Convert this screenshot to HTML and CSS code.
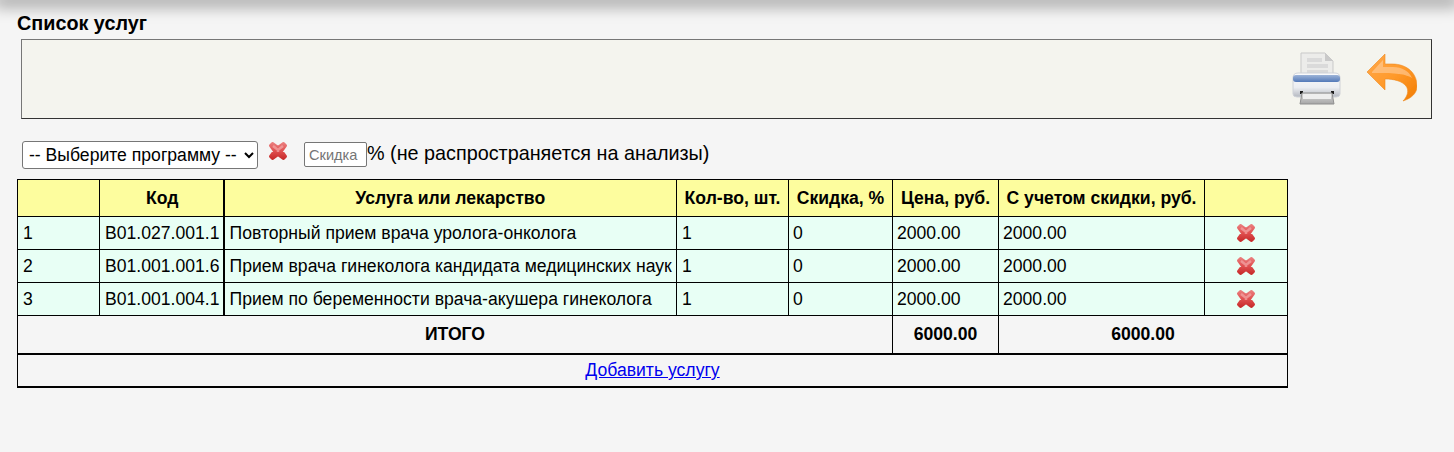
FILE: index.html
```html
<!DOCTYPE html>
<html lang="ru">
<head>
<meta charset="utf-8">
<title>Список услуг</title>
<link rel="stylesheet" href="styles.css">
</head>
<body>
<div class="top-shadow"></div>
<main class="page">
  <h1 class="title">Список услуг</h1>
  <div class="toolbar">
    <svg class="tool-print" width="54" height="56" viewBox="0 0 54 56">
      <defs>
        <linearGradient id="body" x1="0" y1="0" x2="0" y2="1"><stop offset="0" stop-color="#fbfbfc"/><stop offset="0.6" stop-color="#eceef2"/><stop offset="1" stop-color="#b4b8c0"/></linearGradient>
        <linearGradient id="band" x1="0" y1="0" x2="0" y2="1"><stop offset="0" stop-color="#9db4d8"/><stop offset="1" stop-color="#5379b8"/></linearGradient>
        <linearGradient id="tray" x1="0" y1="0" x2="0" y2="1"><stop offset="0" stop-color="#dcdcdc"/><stop offset="1" stop-color="#a6a6a6"/></linearGradient>
        <filter id="soft" x="-5%" y="-5%" width="110%" height="110%"><feGaussianBlur stdDeviation="0.400"/></filter>
      </defs>
      <g filter="url(#soft)">
        <path d="M13 3H37L45 11V27H13Z" fill="#ececea" stroke="#c9c9c9"/>
        <path d="M37 3V11H45Z" fill="#c9c9c9"/>
        <path d="M19 8H34V12H19ZM19 14H40V18H19ZM19 20H40V23H19Z" fill="#dadada"/>
        <path d="M5 28Q5 23 10 23H47Q52 23 52 28V44Q52 47 48 47H9Q5 47 5 44Z" fill="url(#body)" stroke="#cfd2d8"/>
        <rect x="5" y="25" width="47" height="7" rx="3" fill="url(#band)"/>
        <rect x="12" y="41" width="3" height="3" fill="#1c1c1c"/>
        <rect x="43" y="41" width="3" height="3" fill="#1c1c1c"/>
        <path d="M14 43H44L46 54H12Z" fill="url(#tray)" stroke="#8f8f8f"/>
        <rect x="15" y="44" width="28" height="5" fill="#eeeeee"/>
      </g>
    </svg>
    <svg class="tool-back" width="52" height="54" viewBox="0 0 52 54">
      <defs>
        <linearGradient id="arrow" x1="0" y1="0" x2="1" y2="1"><stop offset="0" stop-color="#ffa94d"/><stop offset="0.5" stop-color="#ff9a2b"/><stop offset="1" stop-color="#f27c02"/></linearGradient>
      </defs>
      <g filter="url(#soft)">
        <path d="M2 22L20 4V14H27C43 14 52 24 52 36C52 43 47 48 38 51C43 46 44 40 41 36C37 31 29 29 20 29V40Z" fill="url(#arrow)" stroke="#ee8a20" stroke-width="0.600"/>
        <path d="M7 22L18 10V17H28C37 17 44 21 47 28C38 23 28 23 7 23Z" fill="#ffcf9e" opacity="0.600"/>
      </g>
    </svg>
  </div>
  <div class="filters">
    <select class="program"><option>-- Выберите программу --</option></select>
    <svg class="del del-filter" width="20" height="20" viewBox="0 0 20 20"><use href="#cross"/></svg>
    <input class="discount" type="text" placeholder="Скидка">
    <span class="note">% (не распространяется на анализы)</span>
  </div>
  <table class="services">
    <colgroup>
      <col class="c1"><col class="c2"><col class="c3"><col class="c4"><col class="c5"><col class="c6"><col class="c7"><col class="c8">
    </colgroup>
    <thead>
      <tr>
        <th></th><th class="thick-r">Код</th><th>Услуга или лекарство</th><th>Кол-во, шт.</th><th>Скидка, %</th><th>Цена, руб.</th><th>С учетом скидки, руб.</th><th></th>
      </tr>
    </thead>
    <tbody>
      <tr class="row"><td>1</td><td class="thick-r">B01.027.001.1</td><td>Повторный прием врача уролога-онколога</td><td>1</td><td>0</td><td>2000.00</td><td>2000.00</td><td class="act"><svg class="del" width="20" height="20" viewBox="0 0 20 20"><use href="#cross"/></svg></td></tr>
      <tr class="row"><td>2</td><td class="thick-r">B01.001.001.6</td><td>Прием врача гинеколога кандидата медицинских наук</td><td>1</td><td>0</td><td>2000.00</td><td>2000.00</td><td class="act"><svg class="del" width="20" height="20" viewBox="0 0 20 20"><use href="#cross"/></svg></td></tr>
      <tr class="row"><td>3</td><td class="thick-r">B01.001.004.1</td><td>Прием по беременности врача-акушера гинеколога</td><td>1</td><td>0</td><td>2000.00</td><td>2000.00</td><td class="act"><svg class="del" width="20" height="20" viewBox="0 0 20 20"><use href="#cross"/></svg></td></tr>
      <tr class="total"><th colspan="5">ИТОГО</th><th>6000.00</th><th colspan="2">6000.00</th></tr>
      <tr class="add"><td colspan="8"><a href="#">Добавить услугу</a></td></tr>
    </tbody>
  </table>
</main>
<svg class="defs" width="0" height="0">
  <defs>
    <linearGradient id="crossfill" x1="0" y1="0" x2="0" y2="1"><stop offset="0" stop-color="#e97a7a"/><stop offset="0.5" stop-color="#e05050"/><stop offset="1" stop-color="#c92e2e"/></linearGradient>
    <filter id="crosssoft" x="-20%" y="-20%" width="140%" height="140%"><feGaussianBlur stdDeviation="0.700"/></filter>
    <g id="cross">
      <path d="M4.500 2.500L10 6.500L15.500 2.500L17.500 4.500L13.500 10L17.500 15.500L15.500 17.500L10 13.500L4.500 17.500L2.500 15.500L6.500 10L2.500 4.500Z" fill="url(#crossfill)" stroke="url(#crossfill)" stroke-width="3" stroke-linejoin="round"/>
      <path d="M5 5L10 9L15 5M10 9V11" fill="none" stroke="#f7b5b5" stroke-width="2.500" opacity="0.600" filter="url(#crosssoft)"/>
    </g>
  </defs>
</svg>
</body>
</html>
```
FILE: styles.css
```css
html, body {
  margin: 0;
  height: 452px;
  overflow: hidden;
}
body {
  background: #f5f5f5;
  font-family: "Liberation Sans", Arial, sans-serif;
  font-size: 17.6px;
  color: #000;
}
.top-shadow {
  height: 0;
  box-shadow: 0 0 16px 6px rgba(0, 0, 0, 0.38);
}
.page {
  padding: 13px 0 0 17px;
}
.title {
  margin: 0;
  font-size: 19.800px;
  line-height: 21px;
  font-weight: bold;
}
.toolbar {
  box-sizing: border-box;
  width: 1411px;
  height: 80px;
  margin: 5px 0 0 4px;
  background: #f4f4ee;
  border: 1px solid;
  border-color: #767676 #333 #333 #767676;
  display: flex;
  justify-content: flex-end;
  align-items: flex-start;
  gap: 23px;
  padding: 10px 14px 0 0;
}
.filters {
  display: flex;
  align-items: flex-start;
  margin: 22px 0 0 5px;
  height: 38px;
}
.program {
  box-sizing: border-box;
  width: 236px;
  height: 28px;
  font-family: "Liberation Sans", Arial, sans-serif;
  font-size: 17.600px;
  background: #fff;
  border: 1px solid #767676;
  border-radius: 3px;
  padding: 0 0 0 2px;
}
.del {
  display: block;
}
.del-filter {
  margin: 0 16px 0 10px;
}
.discount {
  box-sizing: border-box;
  width: 63px;
  height: 25px;
  margin: 1px 0 0 0;
  padding: 1px 4px;
  font-family: "Liberation Sans", Arial, sans-serif;
  font-size: 14.600px;
  background: #fff;
  border: 1px solid #767676;
  border-radius: 2px;
}
.discount::placeholder {
  color: #757575;
}
.note {
  font-size: 19.800px;
  line-height: 24px;
}
.services {
  border-collapse: collapse;
  table-layout: fixed;
  width: 1271px;
  box-sizing: border-box;
  font-size: 17.600px;
}
.c1 { width: 82px; }
.c2 { width: 124px; }
.c3 { width: 453px; }
.c4 { width: 112px; }
.c5 { width: 104px; }
.c6 { width: 106px; }
.c7 { width: 206px; }
.c8 { width: 83px; }
.services th,
.services td {
  border: 1px solid #000;
  padding: 0 4px;
  white-space: nowrap;
  overflow: hidden;
}
.services thead th {
  background: #fdfd9e;
  height: 36px;
}
.services th.thick-r {
  border-right-width: 2px;
  padding-left: 6px;
}
.services td.thick-r {
  border-right-width: 2px;
}
.row td {
  background: #e8fff5;
  height: 32px;
}
.services .row td:nth-child(-n+4) {
  padding-left: 5px;
}
.services .row .act {
  padding: 0;
}
.act .del {
  margin: 0 auto;
}
.total th {
  height: 37px;
  border-bottom-width: 2px;
}
.add td {
  height: 31px;
  text-align: center;
  border-bottom-width: 2px;
}
.add a {
  color: #0000ee;
}
.defs {
  position: absolute;
}
```
